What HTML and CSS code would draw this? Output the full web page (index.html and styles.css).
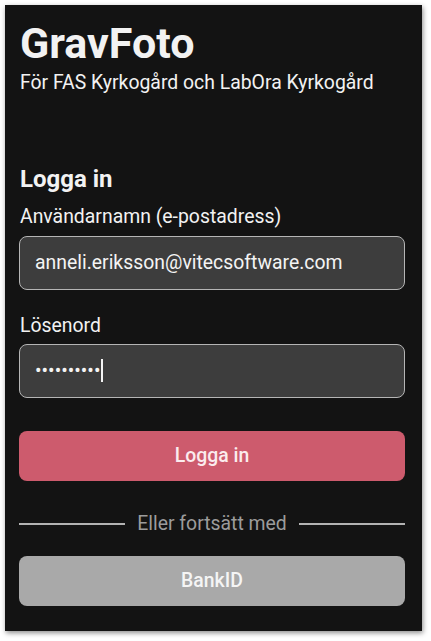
FILE: index.html
```html
<!DOCTYPE html>
<html lang="sv">
<head>
  <meta charset="UTF-8">
  <meta name="viewport" content="width=device-width, initial-scale=1.0">
  <title>GravFoto – Logga in</title>
  <link rel="stylesheet" href="styles.css">
</head>
<body>
  <main class="panel">
    <header class="brand">
      <h1 class="brand__title">GravFoto</h1>
      <p class="brand__subtitle">För FAS Kyrkogård och LabOra Kyrkogård</p>
    </header>

    <form class="login">
      <h2 class="login__heading">Logga in</h2>

      <label class="login__label" for="email">Användarnamn (e-postadress)</label>
      <input class="login__input" id="email" type="text" value="anneli.eriksson@vitecsoftware.com">

      <label class="login__label login__label--second" for="password">Lösenord</label>
      <div class="login__input login__input--password" id="password">
        <span class="login__dots">••••••••••</span><span class="login__caret"></span>
      </div>

      <button class="btn btn--primary" type="button">Logga in</button>

      <div class="divider">
        <span class="divider__line"></span>
        <span class="divider__text">Eller fortsätt med</span>
        <span class="divider__line"></span>
      </div>

      <button class="btn btn--bankid" type="button">BankID</button>
    </form>
  </main>
</body>
</html>
```

FILE: styles.css
```css
* {
  margin: 0;
  padding: 0;
  box-sizing: border-box;
}

body {
  background-color: #ffffff;
  font-family: Roboto, "Noto Sans", Arial, sans-serif;
  padding: 5px 9px 10px 5px;
}

.panel {
  height: 626px;
  background-color: #131313;
  color: #f2f2f2;
  padding: 13px 17px 0 14px;
  box-shadow: 1px 2px 5px rgba(0, 0, 0, 0.45);
}

/* Brand */
.brand__title {
  font-size: 43px;
  font-weight: 700;
  line-height: 50px;
  padding-left: 1px;
}

.brand__subtitle {
  font-size: 19.4px;
  line-height: 24px;
  padding-left: 1px;
  margin-top: 3px;
}

/* Form */
.login {
  display: flex;
  flex-direction: column;
  margin-top: 69.5px;
}

.login__heading {
  font-size: 24px;
  font-weight: 700;
  line-height: 28px;
  padding-left: 1px;
}

.login__label {
  font-size: 19.4px;
  line-height: 24px;
  padding-left: 1px;
  margin-top: 12.5px;
  margin-bottom: 6.6px;
}

.login__label--second {
  margin-top: 24.4px;
  margin-bottom: 5.6px;
}

.login__input {
  height: 54px;
  width: 100%;
  background-color: #3d3d3d;
  border: 1px solid #b5b5b5;
  border-radius: 8px;
  color: #f4f4f4;
  font-family: inherit;
  font-size: 19.4px;
  padding: 0 15px;
  outline: none;
}

.login__input--password {
  display: flex;
  align-items: center;
}

.login__dots {
  font-size: 19.4px;
}

.login__caret {
  width: 1.5px;
  height: 23px;
  background-color: #f4f4f4;
  margin-left: 1px;
}

/* Buttons */
.btn {
  height: 50px;
  width: 100%;
  border: none;
  border-radius: 8px;
  font-family: inherit;
  font-size: 19.4px;
  font-weight: 500;
}

.btn--primary {
  background-color: #cd5b6d;
  color: #fbecee;
  margin-top: 33px;
}

.btn--bankid {
  background-color: #a9a9a9;
  color: #f5f5f5;
}

/* Divider */
.divider {
  display: flex;
  align-items: center;
  gap: 12px;
  height: 24px;
  margin: 31px 0 20px;
}

.divider__line {
  flex: 1;
  height: 2px;
  background-color: #b3b3b3;
}

.divider__text {
  color: #9c9c9c;
  font-size: 19.4px;
  line-height: 24px;
}
```
